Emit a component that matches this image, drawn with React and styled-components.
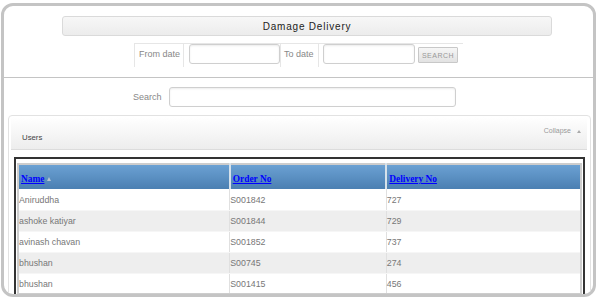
import React from "react";
import styled, { createGlobalStyle } from "styled-components";

const Global = createGlobalStyle`
  html, body { margin: 0; padding: 0; background: #fff; }
  body { font-family: "Liberation Sans", Arial, sans-serif; }
  * { box-sizing: border-box; }
`;

const Frame = styled.div`
  margin: 3px 0 0 1px;
  width: 595px;
  height: 294px;
  border: 3px solid #c4c4c4;
  border-radius: 12px;
  overflow: hidden;
  background: #fff;
`;

const TitleBar = styled.div`
  margin: 10px 0 0 58px;
  width: 490px;
  height: 20px;
  border: 1px solid #dadada;
  border-radius: 3px;
  background: linear-gradient(#f7f7f7, #ececec);
  display: flex;
  align-items: center;
  justify-content: center;
  font-size: 10px;
  letter-spacing: 0.8px;
  color: #222;
`;

const FormRow = styled.div`
  margin: 7px 0 0 130px;
  width: 329px;
  height: 24px;
  display: flex;
  border-top: 1px solid #e6e6e6;
`;

const Cell = styled.div`
  height: 100%;
  width: ${(p) => p.$w}px;
  border-left: 1px solid #e6e6e6;
  padding-left: ${(p) => p.$pl || 0}px;
  display: flex;
  align-items: flex-start;
  gap: 3px;
`;

const Label = styled.span`
  font-size: 9px;
  color: #888;
  line-height: 20px;
`;

const TextInput = styled.input`
  width: ${(p) => p.$w}px;
  height: 20px;
  margin: 0;
  padding: 0 4px;
  border: 1px solid #cfcfcf;
  border-radius: 3px;
  box-shadow: inset 0 1px 2px rgba(0, 0, 0, 0.08);
  background: #fff;
  outline: none;
`;

const Button = styled.button`
  margin: 3px 0 0 0;
  width: 40px;
  height: 16px;
  padding: 0;
  border: 1px solid #c8c8c8;
  border-radius: 1px;
  background: linear-gradient(#f6f6f6, #e2e2e2);
  font-family: "Liberation Sans", Arial, sans-serif;
  font-size: 7px;
  letter-spacing: 0.5px;
  color: #999;
`;

const Rule = styled.div`
  margin-top: 10px;
  height: 1px;
  background: #c4c4c4;
`;

const SearchRow = styled.div`
  margin: 9px 0 0 129px;
  display: flex;
  align-items: center;
  gap: 7px;
`;

const Panel = styled.div`
  margin: 8px 0 0 4px;
  width: 583px;
  height: 200px;
  border: 1px solid #e2e2e2;
  border-radius: 4px;
  padding: 1px 3px 0 2px;
`;

const PanelHeader = styled.div`
  height: 33px;
  display: flex;
  justify-content: space-between;
  align-items: flex-start;
  padding: 0 6px 0 11px;
  background: linear-gradient(#ffffff, #ededed);
  border-bottom: 1px solid #dcdcdc;
`;

const PanelTitle = styled.span`
  margin-top: 16px;
  font-size: 7.8px;
  line-height: 10px;
  color: #444;
`;

const Collapse = styled.span`
  margin-top: 9px;
  font-size: 7px;
  line-height: 10px;
  color: #999;
  display: flex;
  align-items: center;
  gap: 6px;
`;

const UpArrow = styled.span`
  width: 0;
  height: 0;
  border-left: 2px solid transparent;
  border-right: 2px solid transparent;
  border-bottom: 3px solid #aaa;
`;

const TableBox = styled.div`
  margin: 7px 2px 0 3px;
  border: 2px solid #333;
  padding: 4px 1px 0 1px;
  background: #fff;
`;

const Table = styled.table`
  width: 565px;
  border-collapse: collapse;
  border: 2px solid #cdcdcd;
  table-layout: fixed;
`;

const Th = styled.th`
  height: 25px;
  padding: 0 2px;
  text-align: left;
  background: linear-gradient(#6ba1d3, #4b7fb2);
  border-left: 2px solid #d6e1ea;
  &:first-child { border-left: none; }
`;

const HeadLink = styled.a`
  font-family: "Liberation Serif", "Times New Roman", serif;
  font-weight: bold;
  font-size: 9.4px;
  color: #0000ff;
  text-decoration: underline;
`;

const SortMark = styled.span`
  display: inline-block;
  margin-left: 3px;
  vertical-align: 1px;
  border-left: 2.5px solid transparent;
  border-right: 2.5px solid transparent;
  border-bottom: 4px solid #b8c4cf;
`;

const Tr = styled.tr`
  background: ${(p) => (p.$alt ? "#eeeeee" : "#ffffff")};
`;

const Td = styled.td`
  height: 21px;
  padding: 1px 0 0 0;
  font-size: 8.8px;
  color: #777;
  border-left: 1px solid #e0e0e0;
  border-bottom: 1px solid #f6f6f6;
  &:first-child { border-left: none; }
`;

const rows = [
  ["Aniruddha", "S001842", "727"],
  ["ashoke katiyar", "S001844", "729"],
  ["avinash chavan", "S001852", "737"],
  ["bhushan", "S00745", "274"],
  ["bhushan", "S001415", "456"],
];

export default function App() {
  return (
    <>
      <Global />
      <Frame>
        <TitleBar>Damage Delivery</TitleBar>
        <FormRow>
          <Cell $w={49} $pl={4}>
            <Label>From date</Label>
          </Cell>
          <Cell $w={97} $pl={5}>
            <TextInput $w={91} />
          </Cell>
          <Cell $w={38} $pl={3}>
            <Label>To date</Label>
          </Cell>
          <Cell $w={145} $pl={4}>
            <TextInput $w={92} />
            <Button>SEARCH</Button>
          </Cell>
        </FormRow>
        <Rule />
        <SearchRow>
          <Label>Search</Label>
          <TextInput $w={287} />
        </SearchRow>
        <Panel>
          <PanelHeader>
            <PanelTitle>Users</PanelTitle>
            <Collapse>
              Collapse <UpArrow />
            </Collapse>
          </PanelHeader>
          <TableBox>
            <Table>
              <colgroup>
                <col style={{ width: 211 }} />
                <col style={{ width: 156 }} />
                <col style={{ width: 194 }} />
              </colgroup>
              <thead>
                <tr>
                  <Th>
                    <HeadLink href="#">Name</HeadLink>
                    <SortMark />
                  </Th>
                  <Th>
                    <HeadLink href="#">Order No</HeadLink>
                  </Th>
                  <Th>
                    <HeadLink href="#">Delivery No</HeadLink>
                  </Th>
                </tr>
              </thead>
              <tbody>
                {rows.map((r, i) => (
                  <Tr key={i} $alt={i % 2 === 1}>
                    <Td>{r[0]}</Td>
                    <Td>{r[1]}</Td>
                    <Td>{r[2]}</Td>
                  </Tr>
                ))}
              </tbody>
            </Table>
          </TableBox>
        </Panel>
      </Frame>
    </>
  );
}
